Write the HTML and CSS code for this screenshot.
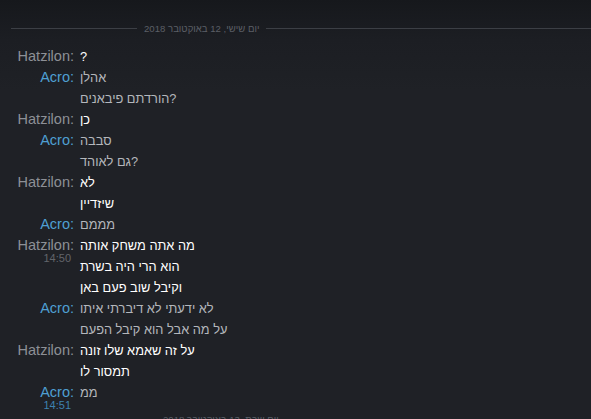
FILE: index.html
```html
<!DOCTYPE html>
<html lang="he">
<head>
<meta charset="utf-8">
<link rel="stylesheet" href="styles.css">
</head>
<body>
<div class="chat">
  <div class="divider"><span class="line-left"></span><span class="date">יום שישי, 12 באוקטובר 2018</span><span class="line-right"></span></div>

  <div class="group them">
    <div class="who"><div class="name">Hatzilon:</div></div>
    <div class="msgs"><div class="msg">?</div></div>
  </div>
  <div class="group me">
    <div class="who"><div class="name">Acro:</div></div>
    <div class="msgs"><div class="msg">אהלן</div><div class="msg">הורדתם פיבאנים?</div></div>
  </div>
  <div class="group them">
    <div class="who"><div class="name">Hatzilon:</div></div>
    <div class="msgs"><div class="msg">כן</div></div>
  </div>
  <div class="group me">
    <div class="who"><div class="name">Acro:</div></div>
    <div class="msgs"><div class="msg">סבבה</div><div class="msg">גם לאוהד?</div></div>
  </div>
  <div class="group them">
    <div class="who"><div class="name">Hatzilon:</div></div>
    <div class="msgs"><div class="msg">לא</div><div class="msg">שיזדיין</div></div>
  </div>
  <div class="group me">
    <div class="who"><div class="name">Acro:</div></div>
    <div class="msgs"><div class="msg">מממם</div></div>
  </div>
  <div class="group them">
    <div class="who"><div class="name">Hatzilon:</div><div class="time">14:50</div></div>
    <div class="msgs"><div class="msg">מה אתה משחק אותה</div><div class="msg">הוא הרי היה בשרת</div><div class="msg">וקיבל שוב פעם באן</div></div>
  </div>
  <div class="group me">
    <div class="who"><div class="name">Acro:</div></div>
    <div class="msgs"><div class="msg">לא ידעתי לא דיברתי איתו</div><div class="msg">על מה אבל הוא קיבל הפעם</div></div>
  </div>
  <div class="group them">
    <div class="who"><div class="name">Hatzilon:</div></div>
    <div class="msgs"><div class="msg">על זה שאמא שלו זונה</div><div class="msg">תמסור לו</div></div>
  </div>
  <div class="group me">
    <div class="who"><div class="name">Acro:</div><div class="time">14:51</div></div>
    <div class="msgs"><div class="msg">ממ</div></div>
  </div>

  <div class="divider bottom"><span class="line-left"></span><span class="date">יום שבת, 13 באוקטובר 2018</span><span class="line-right"></span></div>
</div>
</body>
</html>
```

FILE: styles.css
```css
html, body {
  margin: 0;
  padding: 0;
  height: 100%;
  overflow: hidden;
}
body {
  background: linear-gradient(180deg, #16181c 0px, #1c1e23 40px, #1f2126 90px, #1f2126 100%);
  font-family: Arial, "Liberation Sans", sans-serif;
  color: #dcdedf;
}
.chat {
  padding: 18px 0 0 0;
}
.divider {
  display: flex;
  align-items: center;
  height: 20px;
  margin-bottom: 8px;
}
.divider .line-left {
  margin-left: 11px;
  width: 126px;
  height: 1px;
  background: #3c3f45;
}
.divider .line-right {
  flex: 1;
  height: 1px;
  background: #3c3f45;
}
.divider .date {
  padding: 0 7px;
  font-size: 9.6px;
  color: #5b5f66;
  white-space: nowrap;
}
.divider.bottom {
  margin-top: -2px;
}
.divider.bottom .line-left {
  margin-left: 12px;
  width: 143px;
}
.divider.bottom .date {
  padding: 0 8px;
}
.group {
  display: flex;
  align-items: flex-start;
}
.who {
  width: 74px;
  text-align: right;
  flex: none;
}
.name {
  font-size: 14.5px;
  line-height: 21px;
  white-space: nowrap;
}
.them .name { color: #8d9096; }
.me .name { color: #4e9fd2; }
.time {
  font-size: 11px;
  line-height: 12px;
  margin-top: -4px;
  margin-right: 3px;
}
.them .time { color: #62656b; }
.me .time { color: #3e81b0; }
.msgs {
  margin-left: 6px;
}
.msg {
  font-size: 12.8px;
  line-height: 21px;
  white-space: nowrap;
}
.them .msg { color: #ffffff; font-weight: 500; }
.me .msg { color: #b4b7bc; }
```
